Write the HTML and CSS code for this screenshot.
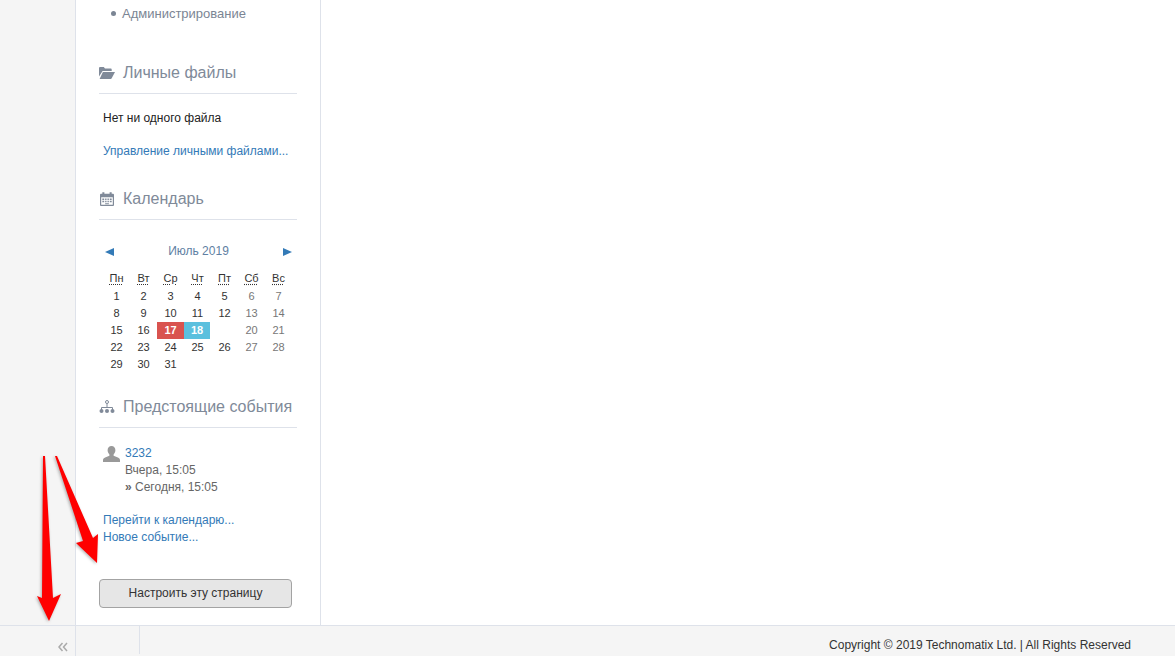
FILE: index.html
```html
<!DOCTYPE html>
<html lang="ru">
<head>
<meta charset="utf-8">
<title>Technomatix</title>
<link rel="stylesheet" href="styles.css">
</head>
<body>
<div class="page">
  <div class="content">
    <div class="rail"></div>
    <aside class="sidebar">
      <ul class="nav-list"><li>Администрирование</li></ul>

      <section class="block block-files">
        <h3 class="block-title">
          <svg class="block-icon" viewBox="0 0 16 14"><path d="M0 2.200C0 1.400.6 1 1.200 1h3.600l1.200 1.400h5.600c.7 0 1.100.5 1.100 1.100V5H3.600L0 10.500V2.200z"/><path d="M3.900 6H16l-3.300 6.300c-.2.4-.6.7-1 .7H.6L3.900 6z"/></svg>
          Личные файлы
        </h3>
        <p class="empty-note">Нет ни одного файла</p>
        <a class="link link-manage" href="#">Управление личными файлами...</a>
      </section>

      <section class="block block-calendar">
        <h3 class="block-title">
          <svg class="block-icon" viewBox="0 0 16 15"><path fill-rule="evenodd" d="M1.500 2H3V.4h2.200V2h5.600V.4H13V2h1.500c.6 0 1 .4 1 1v11c0 .6-.4 1-1 1h-13c-.6 0-1-.4-1-1V3c0-.6.4-1 1-1zM1.800 5.500v8.200h12.400V5.500H1.800z"/><path d="M3 7h2v1.500H3zM6 7h1.500v1.500H6zM8.500 7H10v1.500H8.500zM11 7h2v1.500h-2zM3 9.500h2V11H3zM6 9.500h1.500V11H6zM8.500 9.500H10V11H8.500zM11 9.500h2V11h-2zM6 12h4v1H6z"/></svg>
          Календарь
        </h3>
        <div class="cal-nav">
          <span class="cal-arrow cal-prev"></span>
          <span class="cal-month">Июль 2019</span>
          <span class="cal-arrow cal-next"></span>
        </div>
        <div class="cal-grid">
          <abbr>Пн</abbr><abbr>Вт</abbr><abbr>Ср</abbr><abbr>Чт</abbr><abbr>Пт</abbr><abbr>Сб</abbr><abbr>Вс</abbr>
          <span>1</span><span>2</span><span>3</span><span>4</span><span>5</span><span class="we">6</span><span class="we">7</span>
          <span>8</span><span>9</span><span>10</span><span>11</span><span>12</span><span class="we">13</span><span class="we">14</span>
          <span>15</span><span>16</span><span class="today">17</span><span class="event">18</span><span></span><span class="we">20</span><span class="we">21</span>
          <span>22</span><span>23</span><span>24</span><span>25</span><span>26</span><span class="we">27</span><span class="we">28</span>
          <span>29</span><span>30</span><span>31</span>
        </div>
      </section>

      <section class="block block-events">
        <h3 class="block-title">
          <svg class="block-icon icon-tree" viewBox="0 0 16 14">
            <circle class="node-open" cx="8" cy="2" r="1.500"/>
            <path class="tree-lines" d="M8 3.500V8M2.500 10V7.500h11V10"/>
            <circle cx="2.500" cy="11" r="2"/><circle cx="8" cy="11" r="2"/><circle cx="13.500" cy="11" r="2"/>
          </svg>
          Предстоящие события
        </h3>
        <div class="event-row">
          <svg class="event-icon" viewBox="0 0 17 16"><path d="M8.500 0c2.400 0 3.900 1.800 3.900 4.300 0 1.700-.8 3.200-1.800 4.200v1.200l4.300 1.900c1.200.5 2.100 1.300 2.100 2.400V16H0v-2c0-1.100.9-1.900 2.100-2.400l4.300-1.900V8.500c-1-1-1.800-2.500-1.800-4.200C4.600 1.800 6.100 0 8.500 0z"/></svg>
          <div class="event-text">
            <a class="link" href="#">3232</a>
            <div>Вчера, 15:05</div>
            <div><b class="raquo">»</b> Сегодня, 15:05</div>
          </div>
        </div>
        <div class="event-links">
          <a class="link" href="#">Перейти к календарю...</a>
          <a class="link" href="#">Новое событие...</a>
        </div>
      </section>

      <button class="customize" type="button">Настроить эту страницу</button>
    </aside>
    <main class="main"></main>
  </div>
  <footer class="footer">
    <div class="foot-toggle">
      <svg class="chevrons" viewBox="0 0 10 10"><path d="M4.500 1 1 5l3.500 4M9 1 5.500 5 9 9"/></svg>
    </div>
    <div class="foot-cell"></div>
    <div class="foot-copy">Copyright © 2019 Technomatix Ltd. | All Rights Reserved</div>
  </footer>
  <svg class="annotation" viewBox="0 0 1175 656">
    <defs><filter id="soft" x="-30%" y="-10%" width="160%" height="120%"><feGaussianBlur stdDeviation="1.500"/></filter></defs>
    <g class="arrow-shadow" filter="url(#soft)" transform="translate(-1 1)">
      <polygon points="43,456 45,456 53,598 61,594 49,621 37,596 42,598"/>
      <polygon points="55,456 57,456 93,538 98,534 97,563 76,543 83,541"/>
    </g>
    <g class="arrow">
      <polygon points="43,456 45,456 53,598 61,594 49,621 37,596 42,598"/>
      <polygon points="55,456 57,456 93,538 98,534 97,563 76,543 83,541"/>
    </g>
  </svg>
</div>
</body>
</html>
```
FILE: styles.css
```css
* { box-sizing: border-box; }
html, body { margin: 0; height: 100%; overflow: hidden; }
body {
  font-family: "Liberation Sans", Arial, sans-serif;
  font-size: 12px;
  line-height: 17px;
  color: #333;
  background: #fff;
}
.page { position: relative; display: flex; flex-direction: column; height: 656px; }
.content { flex: 1; display: flex; min-height: 0; overflow: hidden; }
.rail { width: 76px; background: #f5f5f5; border-right: 1px solid #dee2ea; }
.sidebar { width: 245px; padding: 5px 23px 0 23px; border-right: 1px solid #dee2ea; }
.main { flex: 1; }

.nav-list { list-style: none; margin: 0; padding: 0 0 0 23px; color: #7b8594; font-size: 13px; position: relative; }
.nav-list li { position: relative; }
.nav-list li::before {
  content: ""; position: absolute; left: -11px; top: 6px;
  width: 5px; height: 5px; border-radius: 50%; background: #7b8594;
}

.block-title {
  display: flex; align-items: center; gap: 8px;
  margin: 0; height: 33px; padding-bottom: 9px;
  font-size: 16px; font-weight: 400; line-height: 20px;
  color: #808a99; border-bottom: 1px solid #dee2ea; width: 198px;
}
.block-icon { width: 16px; height: 14px; fill: #808a99; flex: none; }
.icon-tree .node-open { fill: none; stroke: #808a99; stroke-width: 1; }
.icon-tree .tree-lines { fill: none; stroke: #808a99; stroke-width: 1; }
.block-files { margin-top: 39px; }
.block-calendar { margin-top: 27px; }
.block-events { margin-top: 22px; }

.empty-note { margin: 16px 0 0 4px; color: #222; }
.link { color: #337ab7; text-decoration: none; display: block; }
.link-manage { margin: 16px 0 0 4px; }

.cal-nav {
  display: flex; align-items: center; justify-content: space-between;
  width: 187px; margin: 23px 0 0 6px; color: #5b7ea6;
}
.cal-month { color: #5f7fa3; }
.cal-arrow { width: 0; height: 0; border-top: 4px solid transparent; border-bottom: 4px solid transparent; }
.cal-prev { border-right: 9px solid #337ab7; }
.cal-next { border-left: 9px solid #337ab7; }

.cal-grid {
  display: grid; grid-template-columns: repeat(7, 27px); grid-template-rows: 18px; grid-auto-rows: 17px;
  width: 189px; margin: 10px 0 0 4px; font-size: 11px; text-align: center; color: #333;
}
.cal-grid abbr { color: #333; text-decoration: underline dotted; text-underline-offset: 2px; }
.cal-grid .we { color: #777; }
.cal-grid .today { background: #d9534f; color: #fff; font-weight: 700; }
.cal-grid .event { background: #5bc0de; color: #fff; font-weight: 700; margin-right: 1px; }

.event-row { display: flex; margin: 17px 0 0 4px; }
.event-icon { width: 17px; height: 16px; fill: #999; flex: none; margin: 1px 5px 0 0; }
.event-text { color: #666; }
.raquo { color: #666; }
.event-links { margin: 16px 0 0 4px; }

.customize {
  display: block; width: 193px; height: 29px; margin-top: 33px;
  font: inherit; color: #333; background: #e6e6e6;
  border: 1px solid #a3a3a3; border-radius: 4px; padding: 0;
}

.footer {
  display: flex; height: 31px; flex: none;
  background: #f5f5f5; border-top: 1px solid #dee2ea;
}
.foot-toggle {
  width: 76px; border-right: 1px solid #dee2ea;
  display: flex; justify-content: flex-end; align-items: flex-end;
  padding: 0 7px 4px 0;
}
.chevrons { width: 10px; height: 10px; fill: none; stroke: #aaa; stroke-width: 1.500; }
.foot-cell { width: 64px; border-right: 1px solid #dee2ea; margin-bottom: 2px; }
.foot-copy { flex: 1; text-align: right; padding: 11px 44px 0 0; color: #333; }

.annotation { position: absolute; left: 0; top: 0; width: 1175px; height: 656px; pointer-events: none; }
.arrow { fill: #f00; }
.arrow-shadow { fill: rgba(0, 0, 0, .3); }
```
